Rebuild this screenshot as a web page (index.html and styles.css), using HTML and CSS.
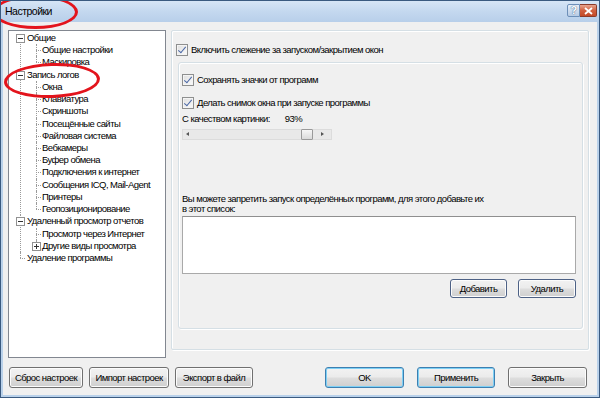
FILE: index.html
```html
<!DOCTYPE html>
<html lang="ru">
<head>
    <meta charset="UTF-8">
    <title>Настройки</title>
    <link rel="stylesheet" href="styles.css">
</head>
<body>
    <div class="window">
        <div class="titlebar">
            <span class="title">Настройки</span>
            <div class="caption-buttons">
                <span class="cap-help">?</span>
                <span class="cap-close">
                    <svg width="9" height="8" viewBox="0 0 9 8"><path d="M1 1 L8 7 M8 1 L1 7" stroke="#fff" stroke-width="1.8"/></svg>
                </span>
            </div>
        </div>

        <div class="client">
            <div class="main">
                <div class="tree">
                    <ul>
                        <li><span class="exp"></span><span class="row">Общие</span>
                            <ul>
                                <li><span class="row">Общие настройки</span></li>
                                <li><span class="row">Маскировка</span></li>
                            </ul>
                        </li>
                        <li><span class="exp"></span><span class="row">Запись логов</span>
                            <ul>
                                <li><span class="row">Окна</span></li>
                                <li><span class="row">Клавиатура</span></li>
                                <li><span class="row">Скриншоты</span></li>
                                <li><span class="row">Посещённые сайты</span></li>
                                <li><span class="row">Файловая система</span></li>
                                <li><span class="row">Вебкамеры</span></li>
                                <li><span class="row">Буфер обмена</span></li>
                                <li><span class="row">Подключения к интернет</span></li>
                                <li><span class="row">Сообщения ICQ, Mail-Agent</span></li>
                                <li><span class="row">Принтеры</span></li>
                                <li><span class="row">Геопозиционирование</span></li>
                            </ul>
                        </li>
                        <li><span class="exp"></span><span class="row">Удаленный просмотр отчетов</span>
                            <ul>
                                <li><span class="row">Просмотр через Интернет</span></li>
                                <li><span class="exp plus"></span><span class="row">Другие виды просмотра</span></li>
                            </ul>
                        </li>
                        <li><span class="row">Удаление программы</span></li>
                    </ul>
                </div>

                <div class="page">
                    <label class="check top-check"><span class="cb"></span>Включить слежение за запуском/закрытием окон</label>

                    <div class="group">
                        <label class="check"><span class="cb"></span>Сохранять значки от программ</label>
                        <label class="check snap"><span class="cb"></span>Делать снимок окна при запуске программы</label>
                        <div class="quality">
                            <span>С качеством картинки:</span>
                            <span class="percent">93%</span>
                        </div>
                        <div class="slider">
                            <span class="arrow left"></span>
                            <span class="thumb"></span>
                            <span class="arrow right"></span>
                        </div>

                        <p class="hint">Вы можете запретить запуск определённых программ, для этого добавьте их<br>в этот список:</p>
                        <div class="listbox"></div>
                        <div class="list-buttons">
                            <button class="btn btn-add">Добавить</button>
                            <button class="btn btn-del">Удалить</button>
                        </div>
                    </div>
                </div>
            </div>

            <div class="footer">
                <div class="footer-left">
                    <button class="btn btn-reset">Сброс настроек</button>
                    <button class="btn btn-import">Импорт настроек</button>
                    <button class="btn btn-export">Экспорт в файл</button>
                </div>
                <div class="footer-right">
                    <button class="btn btn-default btn-ok">OK</button>
                    <button class="btn btn-default btn-apply">Применить</button>
                    <button class="btn btn-close">Закрыть</button>
                </div>
            </div>
        </div>

        <!-- red marker circles drawn over the screenshot -->
        <div class="mark mark-title"></div>
        <div class="mark mark-tree"></div>
    </div>
</body>
</html>
```

FILE: styles.css
```css
* {
    margin: 0;
    padding: 0;
    box-sizing: border-box;
}

body {
    font-family: "Liberation Sans", Arial, sans-serif;
    font-size: 9.5px;
    letter-spacing: -0.55px;
    color: #000;
    background: #fff;
}

.window {
    position: relative;
    width: 600px;
    height: 398px;
    border: 1px solid #3a5a80;
    background: #b9d1ea;
    padding: 0 2px 2px 2px;
    display: flex;
    flex-direction: column;
    overflow: hidden;
}

.titlebar {
    height: 21px;
    display: flex;
    align-items: center;
    justify-content: space-between;
    background: linear-gradient(#d6e5f6 0%, #c4d8ef 50%, #b8cfea 100%);
    margin: 0 -2px;
    padding: 0 2px 0 4px;
}

.title {
    font-size: 10.5px;
    letter-spacing: -0.5px;
    color: #000;
    padding-bottom: 2px;
}

.caption-buttons {
    display: flex;
    align-self: flex-start;
    margin-top: 3px;
}

.cap-help {
    width: 13px;
    height: 13px;
    border: 1px solid #6d8fb8;
    border-radius: 2px 0 0 2px;
    background: linear-gradient(#e6eef8, #b7cbe4);
    font-size: 11px;
    font-weight: bold;
    line-height: 11px;
    text-align: center;
    color: #fff;
    text-shadow: 0 0 1px #4c6a8f, 0 0 1px #4c6a8f;
}

.cap-close {
    width: 17px;
    height: 13px;
    border: 1px solid #8c3b2a;
    border-left: none;
    border-radius: 0 2px 2px 0;
    background: linear-gradient(#e8a48e, #d0603f 50%, #c44a28);
    display: flex;
    align-items: center;
    justify-content: center;
}

.client {
    flex: 1;
    background: #f0f0f0;
    padding: 8px 8px 7px 5px;
    display: flex;
    flex-direction: column;
}

.main {
    display: flex;
    align-items: flex-start;
    gap: 5px;
}

/* tree view */

.tree {
    width: 159px;
    height: 328px;
    background: #fff;
    border: 1px solid #828790;
    padding-top: 1px;
    overflow: hidden;
}

.tree ul {
    list-style: none;
    padding-left: 16px;
}

.tree > ul {
    padding-left: 0;
}

.tree li {
    position: relative;
}

.tree li::before {
    content: "";
    position: absolute;
    left: 11px;
    top: 6px;
    width: 5px;
    border-top: 1px dotted #9a9a9a;
}

.tree li::after {
    content: "";
    position: absolute;
    left: 11px;
    top: 0;
    bottom: 0;
    border-left: 1px dotted #9a9a9a;
}

.tree li:last-child::after {
    bottom: auto;
    height: 6px;
}

.tree > ul > li:first-child::after {
    top: 6px;
}

.row {
    display: block;
    height: 12.22px;
    line-height: 12px;
    padding-left: 17px;
    white-space: nowrap;
}

.tree > ul > li > .row {
    padding-left: 18px;
}

.exp {
    position: absolute;
    left: 7px;
    top: 2px;
    width: 9px;
    height: 9px;
    border: 1px solid #919191;
    background: #fff;
    z-index: 1;
}

.exp::before {
    content: "";
    position: absolute;
    left: 1px;
    top: 3px;
    width: 5px;
    height: 1px;
    background: #333;
}

.exp.plus::after {
    content: "";
    position: absolute;
    left: 3px;
    top: 1px;
    width: 1px;
    height: 5px;
    background: #333;
}

/* right page */

.page {
    width: 418px;
    height: 320px;
    border: 1px solid #d5dfe5;
    border-radius: 2px;
    box-shadow: inset 1px 1px 0 #fff, 1px 1px 0 #fff;
    padding: 12px 5px 0 4px;
}

.check {
    display: flex;
    align-items: center;
    gap: 3px;
    height: 13px;
    line-height: 13px;
    white-space: nowrap;
}

.cb {
    width: 12px;
    height: 12px;
    border: 1px solid #8e8f8f;
    background: linear-gradient(135deg, #dedede, #fbfbfb);
    box-shadow: inset 0 0 0 1px #f4f4f4;
    position: relative;
    flex: none;
}

.cb::after {
    content: "";
    position: absolute;
    left: 3px;
    top: 0px;
    width: 3px;
    height: 7px;
    border: solid #4a67a6;
    border-width: 0 1.5px 1.5px 0;
    transform: rotate(40deg);
}

.group {
    height: 267px;
    margin: 6px 0 0 2px;
    border: 1px solid #d5dfe5;
    border-radius: 3px;
    box-shadow: inset 1px 1px 0 #fff, 1px 1px 0 #fff;
    padding: 10px 6px 0 3px;
}

.snap {
    margin-top: 10px;
}

.quality {
    margin-top: 3px;
    height: 13px;
    line-height: 13px;
    display: flex;
}

.percent {
    margin-left: 15px;
}

.slider {
    position: relative;
    width: 150px;
    height: 11px;
    margin-top: 4px;
    background: #e9e9e9;
    border: 1px solid #dcdcdc;
}

.arrow {
    position: absolute;
    top: 2px;
    width: 0;
    height: 0;
    border-top: 2.5px solid transparent;
    border-bottom: 2.5px solid transparent;
}

.arrow.left {
    left: 3px;
    border-right: 3px solid #555;
}

.arrow.right {
    left: 138px;
    border-left: 3px solid #555;
}

.thumb {
    position: absolute;
    left: 118px;
    top: -1px;
    width: 12px;
    height: 11px;
    border: 1px solid #9a9a9a;
    border-radius: 1px;
    background: linear-gradient(#f6f6f6, #dadada);
}

.hint {
    margin-top: 54px;
    line-height: 10px;
    white-space: nowrap;
}

.listbox {
    margin-top: 2px;
    width: 394px;
    height: 58px;
    background: #fff;
    border: 1px solid #a9a9a9;
    border-top-color: #8f8f8f;
}

.list-buttons {
    display: flex;
    justify-content: flex-end;
    gap: 11px;
    width: 394px;
    margin-top: 5px;
}

.btn {
    font-family: inherit;
    font-size: 9.5px;
    letter-spacing: -0.55px;
    color: #000;
    height: 21px;
    border: 1px solid #707070;
    border-radius: 3px;
    background: linear-gradient(#f2f2f2 0%, #ebebeb 48%, #dddddd 52%, #cfcfcf 100%);
    box-shadow: inset 0 0 0 1px #fcfcfc;
}

.list-buttons .btn {
    height: 19px;
    border-color: #4d6185;
}

.btn-add { width: 57px; }
.btn-del { width: 58px; }

.footer {
    display: flex;
    justify-content: space-between;
    margin-top: 9px;
    padding: 0 2px 0 1px;
}

.footer-left {
    display: flex;
    gap: 6px;
}

.footer-right {
    display: flex;
    gap: 13px;
}

.btn-reset { width: 74px; }
.btn-import { width: 80px; }
.btn-export { width: 78px; }
.btn-ok { width: 79px; }
.btn-apply { width: 78px; }
.btn-close { width: 79px; }

.btn-default {
    border-color: #3c7fb1;
    box-shadow: inset 0 0 0 1px #7ed0f5;
}

/* red annotation marks */

.mark {
    position: absolute;
    border: 3px solid #e3141c;
    border-radius: 50%;
    z-index: 5;
}

.mark-title {
    left: -8px;
    top: -6px;
    width: 85px;
    height: 34px;
}

.mark-tree {
    left: 3px;
    top: 62px;
    width: 96px;
    height: 35px;
    transform: rotate(-2deg);
}
```
